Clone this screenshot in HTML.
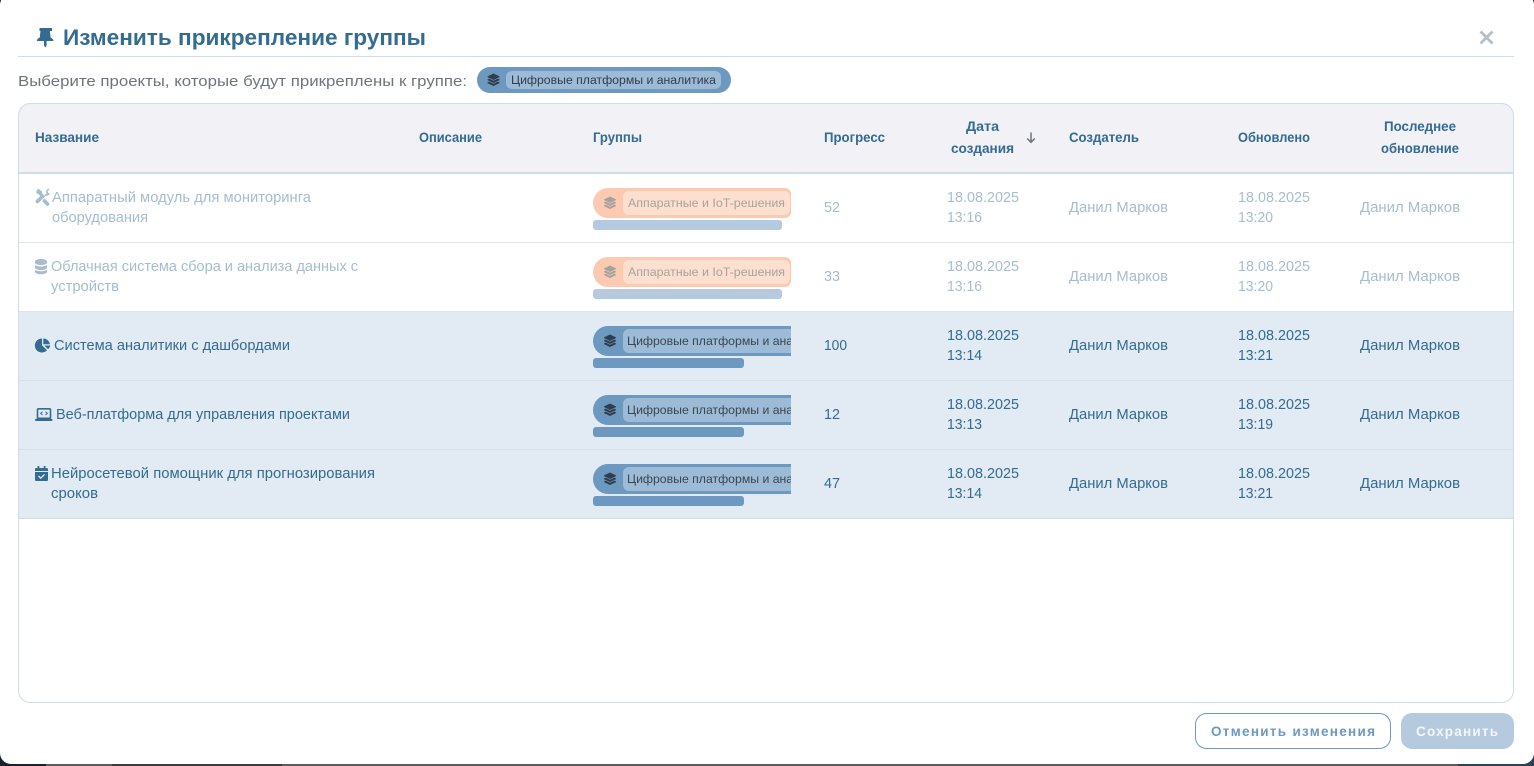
<!DOCTYPE html>
<html lang="ru"><head><meta charset="utf-8"><title>Изменить прикрепление группы</title>
<style>
html,body{margin:0;padding:0;width:1534px;height:766px;overflow:hidden;background:#5c5c5c}
svg{display:block;position:absolute;left:0;top:0}
text{font-family:"Liberation Sans",sans-serif;font-size:14px;fill:#336b91;dominant-baseline:auto}
.h{font-weight:700;font-size:13.8px}
.m{font-size:14.3px}
.d{fill:#a6bdcf}
.c{font-size:12px;fill:#3a4650}
.p{font-size:12px;fill:#a9a29d}
</style></head><body>
<svg width="1534" height="766" viewBox="0 0 1534 766" xmlns="http://www.w3.org/2000/svg">
<defs>
<clipPath id="cl"><rect x="593" y="180" width="198" height="340"/></clipPath>
<clipPath id="card"><rect x="18" y="103" width="1496" height="600" rx="12"/></clipPath>
<g id="lg"><path d="M6 0 11.700 2.800c.5.2.5.8 0 1L6 6.500.3 3.800c-.5-.2-.5-.8 0-1Z"/><path d="M1.600 5.100 6 7.300l4.400-2.200 1.300.7c.5.2.5.8 0 1L6 9.500.3 6.800c-.5-.2-.5-.8 0-1Z"/><path d="M1.600 8.100 6 10.300l4.400-2.200 1.300.7c.5.2.5.8 0 1L6 12.500.3 9.800c-.5-.2-.5-.8 0-1Z"/></g>
<path id="pe" d="M608 0h177a6 6 0 0 1 6 6v18a6 6 0 0 1-6 6H608a15 15 0 0 1 0-30Z"/>
</defs>

<!-- backdrop -->
<rect width="1534" height="766" fill="#5c5c5c"/>
<rect x="0" y="740" width="46" height="26" fill="#17222c"/>
<rect x="1458" y="764" width="76" height="2" fill="#2c4257"/>
<rect x="1510" y="730" width="24" height="36" fill="#2c4257"/>
<rect x="1510" y="0" width="24" height="20" fill="#15202a"/>
<rect x="0" y="0" width="20" height="20" fill="#15202a"/>
<rect x="112" y="764" width="170" height="2" fill="#3d3d3d"/>
<!-- modal -->
<rect x="0" y="-6" width="1534" height="770" rx="11" fill="#fff"/>

<!-- title -->
<path fill="#336b91" d="M39.500 28h12.500v3h-2.200l.8 6.500c1.500.7 2.600 1.600 2.900 3.500H36.800c.3-1.900 1.400-2.800 2.900-3.500l.8-6.500h-1Z M44 41h2.600v4.500l-1.300 2-1.300-2Z"/>
<text x="63" y="45" style="font-size:22px;font-weight:700" textLength="363" lengthAdjust="spacingAndGlyphs">Изменить прикрепление группы</text>
<path d="M1480.500 31.500l12 12M1492.500 31.500l-12 12" stroke="#b4c0c9" stroke-width="2.800" stroke-linecap="butt"/>
<rect x="18" y="56" width="1496" height="1" fill="#cfdde6"/>

<text x="18" y="86" style="font-size:15px;fill:#6c757d" textLength="449" lengthAdjust="spacingAndGlyphs">Выберите проекты, которые будут прикреплены к группе:</text>
<rect x="477" y="67" width="254" height="26" rx="13" fill="#6d98c0"/>
<use href="#lg" x="487.500" y="73.500" fill="#2f3e4c"/>
<rect x="506" y="71" width="215" height="18" rx="6" fill="#9dbbd6"/>
<text x="511" y="84" style="font-size:11.5px;fill:#2f3e4c" textLength="205" lengthAdjust="spacingAndGlyphs">Цифровые платформы и аналитика</text>

<!-- card -->
<g clip-path="url(#card)">
<rect x="18" y="103" width="1496" height="600" fill="#fff"/>
<rect x="18" y="103" width="1496" height="69" fill="#f1f1f6"/>
<rect x="18" y="172" width="1496" height="2" fill="#cfdde6"/>
<rect x="18" y="312" width="1496" height="206" fill="#e2ebf3"/>
<rect x="18" y="242" width="1496" height="1" fill="#e1e4e8"/>
<rect x="18" y="311" width="1496" height="1" fill="#dfe3e8"/>
<rect x="18" y="380" width="1496" height="1" fill="#d9dfe4"/>
<rect x="18" y="449" width="1496" height="1" fill="#d9dfe4"/>
<rect x="18" y="518" width="1496" height="1" fill="#cfdde6"/>
</g>
<rect x="18.500" y="103.500" width="1495" height="599" rx="12" fill="none" stroke="#cfdde6"/>

<!-- header -->
<text class="h" x="35" y="142" textLength="64" lengthAdjust="spacingAndGlyphs">Название</text>
<text class="h" x="419" y="142" textLength="63" lengthAdjust="spacingAndGlyphs">Описание</text>
<text class="h" x="593" y="142" textLength="49" lengthAdjust="spacingAndGlyphs">Группы</text>
<text class="h" x="824" y="142" textLength="61" lengthAdjust="spacingAndGlyphs">Прогресс</text>
<text class="h" x="966" y="131" textLength="33" lengthAdjust="spacingAndGlyphs">Дата</text>
<text class="h" x="951" y="153" textLength="63" lengthAdjust="spacingAndGlyphs">создания</text>
<path d="M1031 132.500v9.500M1027.200 138.500l3.800 3.800 3.800-3.800" fill="none" stroke="#6e7479" stroke-width="1.500"/>
<text class="h" x="1069" y="142" textLength="70" lengthAdjust="spacingAndGlyphs">Создатель</text>
<text class="h" x="1238" y="142" textLength="72" lengthAdjust="spacingAndGlyphs">Обновлено</text>
<text class="h" x="1384" y="131" textLength="72" lengthAdjust="spacingAndGlyphs">Последнее</text>
<text class="h" x="1381" y="153" textLength="78" lengthAdjust="spacingAndGlyphs">обновление</text>

<!-- row 1 -->
<path fill="#a6bdcf" d="M36.500 190.500l2-1.700 3.600 2.800v1.600l2.300 2.300 2.100-2.100-.3-.9c-.5-1.700.9-3.700 3-3.700l.5.2-2.200 2.200.5 1.700 1.700.5 0 0-.6 1.400c-.8.9-2 1.200-3.100.8l-7.300 7.200a1.800 1.800 0 0 1-2.600-2.500l4.200-4.300-2.300-2.300h-1.500ZM44.400 198.400l4.400 4.400a1.800 1.800 0 0 1-2.600 2.500l-4-4Z"/>
<text class="m d" x="52" y="202" textLength="259" lengthAdjust="spacingAndGlyphs">Аппаратный модуль для мониторинга</text>
<text class="m d" x="52" y="222" textLength="96" lengthAdjust="spacingAndGlyphs">оборудования</text>
<use href="#pe" y="188" fill="#fccab0"/>
<rect x="623" y="191" width="167" height="24" rx="6" fill="#fcdfcf"/>
<use href="#lg" x="604" y="196.500" fill="#a5a19e"/>
<text class="p" x="628" y="207" textLength="157" lengthAdjust="spacingAndGlyphs">Аппаратные и IoT-решения</text>
<rect x="593" y="220" width="189" height="10" rx="3" fill="#b5cadf"/>
<text class="m d" x="824" y="212" textLength="16" lengthAdjust="spacingAndGlyphs">52</text>
<text class="m d" x="947" y="202" textLength="72" lengthAdjust="spacingAndGlyphs">18.08.2025</text>
<text class="m d" x="947" y="222" textLength="35" lengthAdjust="spacingAndGlyphs">13:16</text>
<text class="m d" x="1069" y="212" textLength="99" lengthAdjust="spacingAndGlyphs">Данил Марков</text>
<text class="m d" x="1238" y="202" textLength="72" lengthAdjust="spacingAndGlyphs">18.08.2025</text>
<text class="m d" x="1238" y="222" textLength="35" lengthAdjust="spacingAndGlyphs">13:20</text>
<text class="m d" x="1360" y="212" textLength="100" lengthAdjust="spacingAndGlyphs">Данил Марков</text>

<!-- row 2 -->
<path fill="#a6bdcf" d="M35 261.500c0-1.500 2.700-2.500 6-2.500s6 1 6 2.500v1c0 1.500-2.700 2.500-6 2.500s-6-1-6-2.500ZM35 265c1.300 1 3.500 1.500 6 1.500s4.700-.5 6-1.500v2.500c0 1.500-2.700 2.500-6 2.500s-6-1-6-2.500ZM35 269.800c1.300 1 3.500 1.500 6 1.500s4.700-.5 6-1.500v2c0 1.500-2.700 2.500-6 2.500s-6-1-6-2.500Z"/>
<text class="m d" x="51" y="271" textLength="307" lengthAdjust="spacingAndGlyphs">Облачная система сбора и анализа данных с</text>
<text class="m d" x="51" y="291" textLength="68" lengthAdjust="spacingAndGlyphs">устройств</text>
<use href="#pe" y="257" fill="#fccab0"/>
<rect x="623" y="260" width="167" height="24" rx="6" fill="#fcdfcf"/>
<use href="#lg" x="604" y="265.500" fill="#a5a19e"/>
<text class="p" x="628" y="276" textLength="157" lengthAdjust="spacingAndGlyphs">Аппаратные и IoT-решения</text>
<rect x="593" y="289" width="189" height="10" rx="3" fill="#b5cadf"/>
<text class="m d" x="824" y="281" textLength="16" lengthAdjust="spacingAndGlyphs">33</text>
<text class="m d" x="947" y="271" textLength="72" lengthAdjust="spacingAndGlyphs">18.08.2025</text>
<text class="m d" x="947" y="291" textLength="35" lengthAdjust="spacingAndGlyphs">13:16</text>
<text class="m d" x="1069" y="281" textLength="99" lengthAdjust="spacingAndGlyphs">Данил Марков</text>
<text class="m d" x="1238" y="271" textLength="72" lengthAdjust="spacingAndGlyphs">18.08.2025</text>
<text class="m d" x="1238" y="291" textLength="35" lengthAdjust="spacingAndGlyphs">13:20</text>
<text class="m d" x="1360" y="281" textLength="100" lengthAdjust="spacingAndGlyphs">Данил Марков</text>

<!-- row 3 -->
<path fill="#336b91" d="M42 338.500v6.700l5 5a7 7 0 1 1-5-11.700ZM43.300 338.500a6.800 6.800 0 0 1 6.600 5.700h-6.600ZM44.300 345.500h6a7 7 0 0 1-2.200 3.800Z"/>
<text class="m" x="54" y="350" textLength="236" lengthAdjust="spacingAndGlyphs">Система аналитики с дашбордами</text>
<g clip-path="url(#cl)">
<rect x="593" y="326" width="240" height="30" rx="15" fill="#6d98c0"/>
<rect x="623" y="329" width="210" height="24" rx="6" fill="#9dbbd6"/>
<use href="#lg" x="604" y="334.500" fill="#2f3e4c"/>
<text class="c" x="627" y="345" textLength="205" lengthAdjust="spacingAndGlyphs">Цифровые платформы и аналитика</text>
</g>
<rect x="593" y="358" width="151" height="10" rx="3" fill="#6d98c0"/>
<text class="m" x="824" y="350" textLength="23" lengthAdjust="spacingAndGlyphs">100</text>
<text class="m" x="947" y="340" textLength="72" lengthAdjust="spacingAndGlyphs">18.08.2025</text>
<text class="m" x="947" y="360" textLength="35" lengthAdjust="spacingAndGlyphs">13:14</text>
<text class="m" x="1069" y="350" textLength="99" lengthAdjust="spacingAndGlyphs">Данил Марков</text>
<text class="m" x="1238" y="340" textLength="72" lengthAdjust="spacingAndGlyphs">18.08.2025</text>
<text class="m" x="1238" y="360" textLength="35" lengthAdjust="spacingAndGlyphs">13:21</text>
<text class="m" x="1360" y="350" textLength="100" lengthAdjust="spacingAndGlyphs">Данил Марков</text>

<!-- row 4 -->
<rect x="37.500" y="408.800" width="13" height="9.500" rx="1.200" fill="none" stroke="#336b91" stroke-width="1.600"/>
<rect x="35" y="418.700" width="17.500" height="2.300" rx="1" fill="#336b91"/>
<path d="M42.500 411.800l-1.800 1.600 1.800 1.600M45.500 411.800l1.800 1.600-1.800 1.600" fill="none" stroke="#336b91" stroke-width="1"/>
<text class="m" x="56" y="419" textLength="294" lengthAdjust="spacingAndGlyphs">Веб-платформа для управления проектами</text>
<g clip-path="url(#cl)">
<rect x="593" y="395" width="240" height="30" rx="15" fill="#6d98c0"/>
<rect x="623" y="398" width="210" height="24" rx="6" fill="#9dbbd6"/>
<use href="#lg" x="604" y="403.500" fill="#2f3e4c"/>
<text class="c" x="627" y="414" textLength="205" lengthAdjust="spacingAndGlyphs">Цифровые платформы и аналитика</text>
</g>
<rect x="593" y="427" width="151" height="10" rx="3" fill="#6d98c0"/>
<text class="m" x="824" y="419" textLength="16" lengthAdjust="spacingAndGlyphs">12</text>
<text class="m" x="947" y="409" textLength="72" lengthAdjust="spacingAndGlyphs">18.08.2025</text>
<text class="m" x="947" y="429" textLength="35" lengthAdjust="spacingAndGlyphs">13:13</text>
<text class="m" x="1069" y="419" textLength="99" lengthAdjust="spacingAndGlyphs">Данил Марков</text>
<text class="m" x="1238" y="409" textLength="72" lengthAdjust="spacingAndGlyphs">18.08.2025</text>
<text class="m" x="1238" y="429" textLength="35" lengthAdjust="spacingAndGlyphs">13:19</text>
<text class="m" x="1360" y="419" textLength="100" lengthAdjust="spacingAndGlyphs">Данил Марков</text>

<!-- row 5 -->
<path fill="#336b91" d="M37.500 466h1.800v2h4.400v-2h1.800v2h1.200c.9 0 1.300.5 1.300 1.300v1.700H35v-1.700c0-.8.400-1.300 1.300-1.300h1.200ZM35 472h13v7.700c0 .8-.5 1.300-1.300 1.300H36.300c-.8 0-1.300-.5-1.300-1.300Z"/>
<path d="M38.500 476l2.200 2.200 3.800-3.800" fill="none" stroke="#e2ebf3" stroke-width="1.300"/>
<text class="m" x="51" y="478" textLength="324" lengthAdjust="spacingAndGlyphs">Нейросетевой помощник для прогнозирования</text>
<text class="m" x="51" y="498" textLength="47" lengthAdjust="spacingAndGlyphs">сроков</text>
<g clip-path="url(#cl)">
<rect x="593" y="464" width="240" height="30" rx="15" fill="#6d98c0"/>
<rect x="623" y="467" width="210" height="24" rx="6" fill="#9dbbd6"/>
<use href="#lg" x="604" y="472.500" fill="#2f3e4c"/>
<text class="c" x="627" y="483" textLength="205" lengthAdjust="spacingAndGlyphs">Цифровые платформы и аналитика</text>
</g>
<rect x="593" y="496" width="151" height="10" rx="3" fill="#6d98c0"/>
<text class="m" x="824" y="488" textLength="16" lengthAdjust="spacingAndGlyphs">47</text>
<text class="m" x="947" y="478" textLength="72" lengthAdjust="spacingAndGlyphs">18.08.2025</text>
<text class="m" x="947" y="498" textLength="35" lengthAdjust="spacingAndGlyphs">13:14</text>
<text class="m" x="1069" y="488" textLength="99" lengthAdjust="spacingAndGlyphs">Данил Марков</text>
<text class="m" x="1238" y="478" textLength="72" lengthAdjust="spacingAndGlyphs">18.08.2025</text>
<text class="m" x="1238" y="498" textLength="35" lengthAdjust="spacingAndGlyphs">13:21</text>
<text class="m" x="1360" y="488" textLength="100" lengthAdjust="spacingAndGlyphs">Данил Марков</text>

<!-- footer -->
<rect x="1195.500" y="713.500" width="195" height="35" rx="11" fill="#fff" stroke="#6d98c0"/>
<text x="1211" y="736" style="font-size:13.500px;font-weight:700;fill:#6d98c0" textLength="164" lengthAdjust="spacing">Отменить изменения</text>
<rect x="1401" y="713" width="113" height="36" rx="11" fill="#b5cadf"/>
<text x="1416" y="736" style="font-size:13.500px;font-weight:700;fill:#f3f6fa" textLength="82" lengthAdjust="spacing">Сохранить</text>
</svg>
</body></html>
